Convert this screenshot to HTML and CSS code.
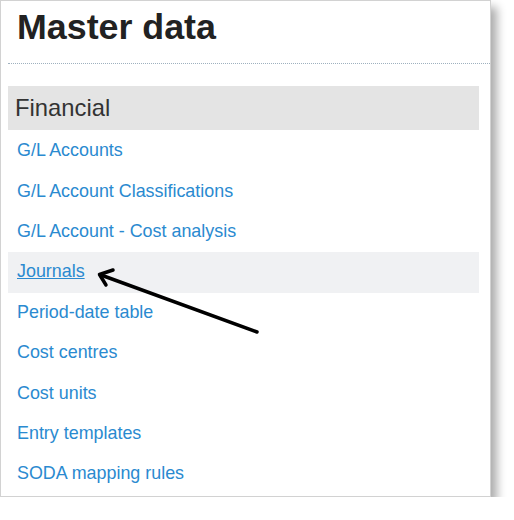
FILE: index.html
```html
<!DOCTYPE html>
<html>
<head>
<meta charset="utf-8">
<link rel="stylesheet" href="styles.css">
</head>
<body>
<div class="panel">
  <div class="head"><h1 class="title">Master data</h1></div>
  <div class="section">
    <div class="section-title">Financial</div>
    <ul class="links">
      <li class="row"><a class="link" href="#">G/L Accounts</a></li>
      <li class="row"><a class="link" href="#">G/L Account Classifications</a></li>
      <li class="row"><a class="link" href="#">G/L Account - Cost analysis</a></li>
      <li class="row row-hover"><a class="link link-hover" href="#">Journals</a></li>
      <li class="row"><a class="link" href="#">Period-date table</a></li>
      <li class="row"><a class="link" href="#">Cost centres</a></li>
      <li class="row"><a class="link" href="#">Cost units</a></li>
      <li class="row"><a class="link" href="#">Entry templates</a></li>
      <li class="row"><a class="link" href="#">SODA mapping rules</a></li>
    </ul>
  </div>
  <svg class="arrow" width="514" height="520" viewBox="0 0 514 520">
    <line x1="257" y1="332" x2="101" y2="275" stroke="#000" stroke-width="3.5" stroke-linecap="round"/>
    <polyline points="113,270 99.5,274.5 106,285" fill="none" stroke="#000" stroke-width="3.5" stroke-linecap="round" stroke-linejoin="round"/>
  </svg>
</div>
</body>
</html>
```
FILE: styles.css
```css
html, body {
  margin: 0;
  padding: 0;
  background: #fff;
}
body {
  font-family: "Liberation Sans", Arial, sans-serif;
}
.panel {
  position: relative;
  box-sizing: border-box;
  width: 491px;
  height: 497px;
  border: 1px solid #d2d2d2;
  background: #fff;
  box-shadow: 6px 7px 9px rgba(0, 0, 0, 0.33);
}
.head {
  box-sizing: border-box;
  height: 63px;
  margin-left: 7px;
  padding: 6px 0 0 9px;
  border-bottom: 1px dotted #9fb1bf;
}
.title {
  margin: 0;
  font-size: 35.8px;
  line-height: 40px;
  font-weight: bold;
  color: #222;
}
.section {
  margin: 22px 11px 0 7px;
}
.section-title {
  height: 44px;
  line-height: 44px;
  padding-left: 7px;
  background: #e4e4e4;
  color: #333;
  font-size: 23.8px;
}
.links {
  list-style: none;
  margin: 1px 0 0;
  padding: 0;
}
.row {
  display: flex;
  align-items: center;
  height: 40.4px;
  padding-left: 9px;
}
.row-hover {
  background: #f0f1f3;
}
.link {
  color: #2a8ad0;
  font-size: 17.9px;
  text-decoration: none;
  margin-top: -1px;
}
.link-hover {
  text-decoration: underline;
}
.arrow {
  position: absolute;
  left: -1px;
  top: -1px;
  pointer-events: none;
}
```
